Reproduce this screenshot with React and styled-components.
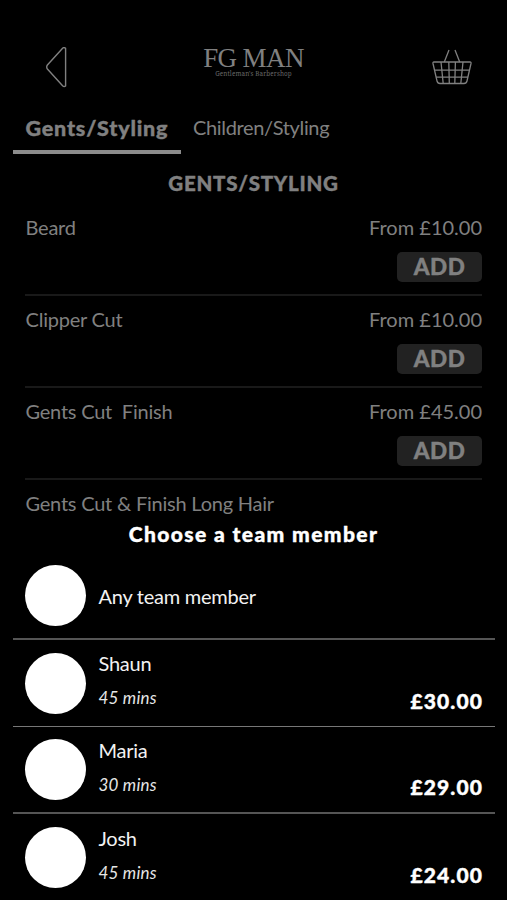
import React from 'react';
import styled, { createGlobalStyle } from 'styled-components';

const services = [
  { name: 'Beard', price: 'From £10.00' },
  { name: 'Clipper Cut', price: 'From £10.00' },
  { name: 'Gents Cut  Finish', price: 'From £45.00' },
  { name: 'Gents Cut & Finish Long Hair' }
];

const members = [
  { name: 'Shaun', time: '45 mins', price: '£30.00', line: 1 },
  { name: 'Maria', time: '30 mins', price: '£29.00', line: 2 },
  { name: 'Josh', time: '45 mins', price: '£24.00', line: 0 }
];

const BackIcon = () => (
  <svg width='24' height='42' viewBox='0 0 24 42' fill='none'>
    <path
      d='M17.6 1.2 L2.4 18 Q1 20 2.4 22 L17.6 38.8 Q19 40.2 20.6 39 V1.4 Q19 0 17.6 1.2Z'
      stroke='#808080'
      strokeWidth='1.4'
      strokeLinejoin='round'
    />
  </svg>
);

const BasketIcon = () => (
  <svg width='40' height='38' viewBox='0 0 40 38' fill='none'>
    <g stroke='#808080' strokeWidth='1.3' strokeLinejoin='round'>
      <path d='M12.3 15 L17 3 M27.7 15 L23 3' />
      <path d='M2 15 H38 Q39.3 15 39 16.5 L35 34 Q34.4 36.5 32 36.5 H8 Q5.6 36.5 5 34 L1 16.5 Q.7 15 2 15Z' />
      <path d='M2.5 23.2 H37.5 M4 30.2 H36' />
      <path d='M9 15 L11.2 36.5 M16.8 15 L17.3 36.5 M23.4 15 L22.8 36.5 M31 15 L28.8 36.5' />
    </g>
  </svg>
);

const App = () => (
  <Phone>
    <GlobalStyle />
    <Screen>
      <Header>
        <BackIcon />
        <Logo>
          <LogoName>FG MAN</LogoName>
          <LogoTag>Gentleman's Barbershop</LogoTag>
        </Logo>
        <BasketIcon />
      </Header>
      <Tabs>
        <Tab $active>Gents/Styling</Tab>
        <Tab>Children/Styling</Tab>
      </Tabs>
      <Heading>GENTS/STYLING</Heading>
      {services.map(({ name, price }) => (
        <Service key={name}>
          <ServiceName>{name}</ServiceName>
          {price && (
            <Side>
              <From>{price}</From>
              <Add>ADD</Add>
            </Side>
          )}
        </Service>
      ))}
    </Screen>
    <Sheet>
      <SheetTitle>Choose a team member</SheetTitle>
      <Member $line={2}>
        <Avatar />
        <Name>Any team member</Name>
      </Member>
      {members.map(({ name, time, price, line }) => (
        <Member key={name} $line={line}>
          <Avatar />
          <Info>
            <Name>{name}</Name>
            <Time>{time}</Time>
          </Info>
          <Price>{price}</Price>
        </Member>
      ))}
    </Sheet>
  </Phone>
);

const GlobalStyle = createGlobalStyle`
  body {
    margin: 0;
    background: #000;
  }
  * {
    box-sizing: border-box;
  }
`;

const Phone = styled.div`
  width: 507px;
  height: 900px;
  overflow: hidden;
  background: #000;
  color: #fff;
  font-family: Lato, 'Open Sans', sans-serif;
  font-size: 20px;
  line-height: 24px;
  white-space: pre;
`;

const Screen = styled.div`
  height: 520px;
  overflow: hidden;
  color: #808080;
`;

const Header = styled.header`
  display: flex;
  justify-content: space-between;
  align-items: flex-start;
  height: 115px;
  padding: 47px 35px 0 45px;
`;

const Logo = styled.div`
  font-family: 'Liberation Serif', serif;
  text-align: center;
  margin-left: 6px;
`;

const LogoName = styled.div`
  font-size: 27px;
  line-height: 23px;
  letter-spacing: -0.6px;
`;

const LogoTag = styled.div`
  font-family: 'Noto Serif', 'DejaVu Serif', serif;
  font-size: 6.3px;
  line-height: 7px;
  letter-spacing: 0.13px;
  color: #686868;
`;

const Tabs = styled.nav`
  display: flex;
  height: 55px;
  padding-left: 13px;
`;

const Tab = styled.div`
  height: 39px;
  padding: 0 12px;
  letter-spacing: -0.35px;
  ${p =>
    p.$active &&
    `
    width: 168px;
    padding-left: 12.5px;
    font-size: 21.5px;
    font-weight: 900;
    line-height: 26px;
    letter-spacing: 0.8px;
    -webkit-text-stroke: 0.4px;
    border-bottom: 4px solid #8c8c8c;
  `}
`;

const Heading = styled.h1`
  margin: 0;
  height: 34px;
  font-size: 20.5px;
  font-weight: 900;
  line-height: 26px;
  letter-spacing: 0.75px;
  text-align: center;
  -webkit-text-stroke: 0.4px;
`;

const Service = styled.div`
  display: flex;
  justify-content: space-between;
  height: 92px;
  margin: 0 25px;
  padding-top: 11px;
  letter-spacing: -0.22px;
  border-bottom: 2px solid #191919;
`;

const ServiceName = styled.div`
  padding-left: 0.5px;
`;

const Side = styled.div`
  display: flex;
  flex-direction: column;
  align-items: flex-end;
`;

const From = styled.div`
  height: 37px;
  letter-spacing: 0;
`;

const Add = styled.button`
  width: 85px;
  height: 30px;
  padding: 0;
  border: 0;
  border-radius: 5px;
  background: #222;
  color: #808080;
  font: 900 22.5px/30px Lato, sans-serif;
  letter-spacing: 0.5px;
  -webkit-text-stroke: 0.4px;
`;

const Sheet = styled.section`
  height: 380px;
`;

const SheetTitle = styled.h2`
  margin: 0;
  height: 33px;
  padding-top: 2px;
  font-size: 21px;
  font-weight: 900;
  letter-spacing: 1.4px;
  text-align: center;
  -webkit-text-stroke: 0.4px;
`;

const Member = styled.div`
  display: flex;
  align-items: center;
  height: 87px;
  margin: 0 12px 0 13px;
  padding: 0 12px;
  border-bottom: ${p => p.$line}px solid ${p => (p.$line === 1 ? '#777' : '#555')};
`;

const Avatar = styled.div`
  flex: none;
  width: 61px;
  height: 61px;
  margin-right: 12.5px;
  border-radius: 50%;
  background: #fff;
`;

const Info = styled.div`
  flex: 1;
  height: 64px;
`;

const Name = styled.div`
  color: #f2f2f2;
  letter-spacing: -0.25px;
`;

const Time = styled.div`
  margin-top: 11px;
  font-size: 17px;
  font-style: italic;
  letter-spacing: 0.2px;
  color: #e6e6e6;
`;

const Price = styled.div`
  padding-top: 35px;
  font-size: 21px;
  font-weight: 900;
  letter-spacing: 1.1px;
  -webkit-text-stroke: 0.4px;
`;

export default App;
